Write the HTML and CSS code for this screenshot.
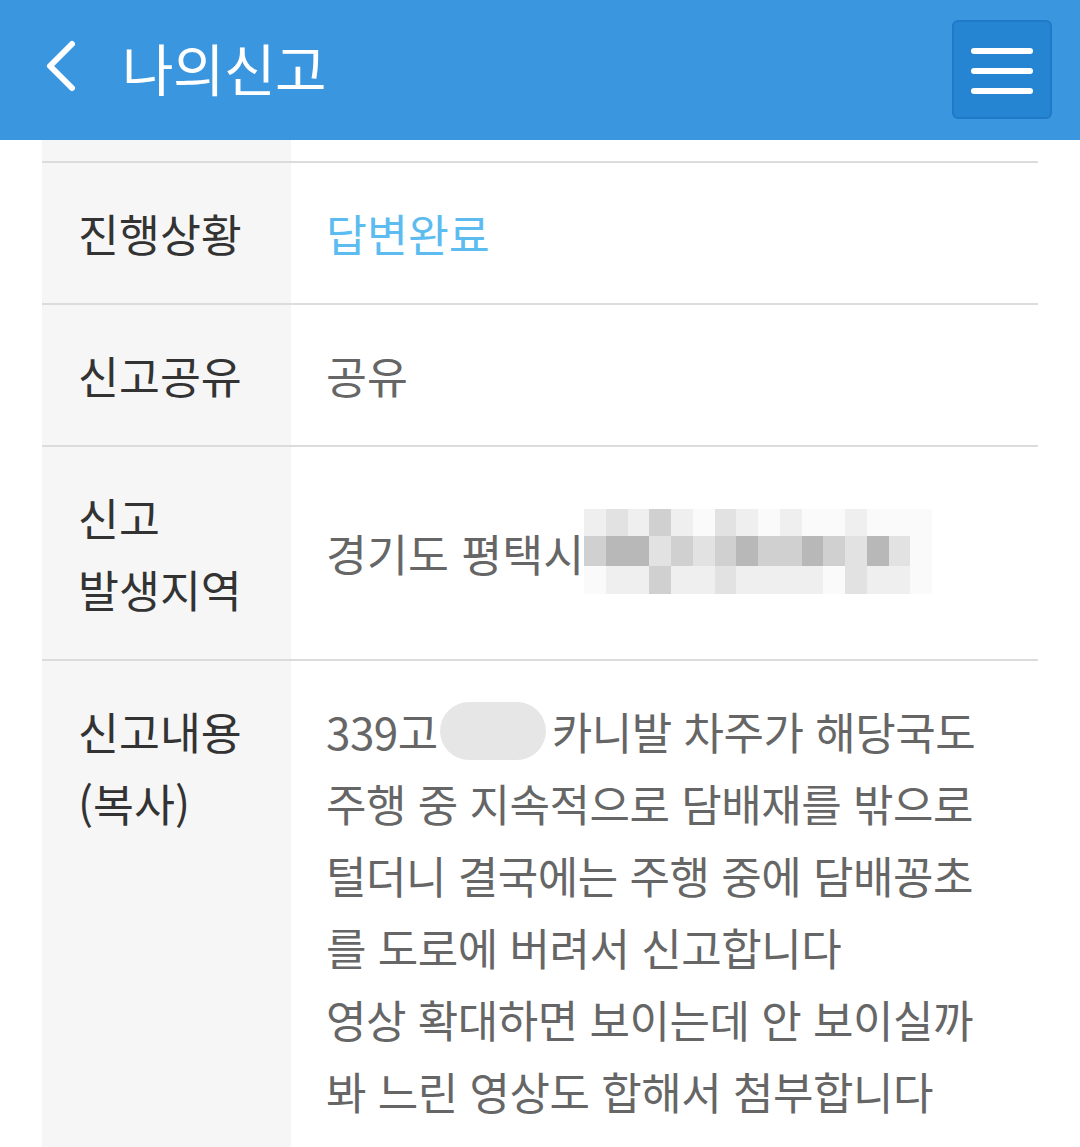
FILE: index.html
```html
<!DOCTYPE html>
<html lang="ko">
<head>
<meta charset="utf-8">
<title>나의신고</title>
<link rel="stylesheet" href="styles.css">
</head>
<body>
<header class="topbar">
  <a class="back" href="#" aria-label="뒤로">
    <svg width="40" height="56" viewBox="0 0 40 56"><path d="M32 6 L10 28 L32 50" fill="none" stroke="#fff" stroke-width="6" stroke-linecap="round" stroke-linejoin="round"/></svg>
  </a>
  <h1 class="title">나의신고</h1>
  <button class="menu" aria-label="메뉴">
    <span class="bar"></span><span class="bar"></span><span class="bar"></span>
  </button>
</header>
<main class="wrap">
  <div class="table">
    <div class="row stub"><div class="th"></div><div class="td"></div></div>
    <div class="row">
      <div class="th">진행상황</div>
      <div class="td status">답변완료</div>
    </div>
    <div class="row">
      <div class="th">신고공유</div>
      <div class="td">공유</div>
    </div>
    <div class="row">
      <div class="th">신고<br>발생지역</div>
      <div class="td center">경기도 평택시<span class="mosaic"><span class="m r1"><i class="c1"></i><i class="c2"></i><i class="c1"></i><i class="c3"></i><i class="c1"></i><i class="c0"></i><i class="c2"></i><i class="c1"></i><i class="c0"></i><i class="c1"></i><i class="c0"></i><i class="c0"></i><i class="c1"></i><i class="c0"></i><i class="c0"></i><i class="c0"></i></span><span class="m r2"><i class="c3"></i><i class="c4"></i><i class="c4"></i><i class="c2"></i><i class="c3"></i><i class="c2"></i><i class="c3"></i><i class="c4"></i><i class="c3"></i><i class="c3"></i><i class="c4"></i><i class="c3"></i><i class="c2"></i><i class="c4"></i><i class="c2"></i><i class="c0"></i></span><span class="m r3"><i class="c0"></i><i class="c1"></i><i class="c1"></i><i class="c3"></i><i class="c1"></i><i class="c1"></i><i class="c2"></i><i class="c1"></i><i class="c1"></i><i class="c1"></i><i class="c1"></i><i class="c0"></i><i class="c2"></i><i class="c1"></i><i class="c1"></i><i class="c0"></i></span></span></div>
    </div>
    <div class="row last">
      <div class="th">신고내용<br>(복사)</div>
      <div class="td content">339고<span class="blob"></span>카니발 차주가 해당국도<br>주행 중 지속적으로 담배재를 밖으로<br>털더니 결국에는 주행 중에 담배꽁초<br>를 도로에 버려서 신고합니다<br>영상 확대하면 보이는데 안 보이실까<br>봐 느린 영상도 합해서 첨부합니다</div>
    </div>
  </div>
</main>
</body>
</html>
```

FILE: styles.css
```css
* { box-sizing: border-box; }
html, body { margin: 0; padding: 0; }
body {
  background: #fff;
  font-family: "Noto Sans CJK KR", "Noto Sans", sans-serif;
  width: 1080px;
  height: 1147px;
  overflow: hidden;
}
.topbar {
  height: 140px;
  background: #3a97df;
  display: flex;
  align-items: center;
  padding: 0 28px 0 40px;
}
.back { display: flex; align-items: center; width: 44px; height: 60px; margin-top: -8px; }
.title {
  margin: -8px 0 0 38px;
  color: #fff;
  font-size: 56px;
  font-weight: 400;
  letter-spacing: -0.5px;
  flex: 1;
}
.menu {
  width: 100px;
  height: 99px;
  margin-top: -2px;
  background: #2585d3;
  border: 2px solid #2079c6;
  border-radius: 6px;
  display: flex;
  flex-direction: column;
  align-items: center;
  justify-content: flex-start;
  gap: 14px;
  padding: 26px 0 0;
}
.bar { display: block; width: 62px; height: 6px; background: #fff; border-radius: 3px; }

.wrap { padding: 0 42px; }
.table { width: 996px; }
.row {
  display: grid;
  grid-template-columns: 249px 1fr;
  border-bottom: 2px solid #dcdcdc;
}
.row.stub { height: 23px; }
.row.last { border-bottom: none; }
.th {
  background: #f6f6f6;
  color: #333;
  font-size: 44.5px;
  line-height: 72px;
  padding: 34px 0 34px 36px;
  letter-spacing: 0;
}
.td {
  color: #666;
  font-size: 44.5px;
  line-height: 72px;
  padding: 34px 0 34px 35px;
  letter-spacing: 0;
  white-space: nowrap;
}
.stub .th, .stub .td { padding: 0; }
.td.status { color: #5cbcf0; }
.td.center { display: flex; align-items: center; }
.content { font-size: 44px; line-height: 72px; padding-top: 34px; letter-spacing: -0.5px; }

.mosaic {
  display: inline-flex;
  flex-direction: column;
  width: 348px;
  height: 85px;
  margin-top: -4px;
  margin-left: 0;
}
.m { display: flex; height: 28px; }
.m.r1 { height: 27px; }
.m.r2 { height: 30px; }
.m i { flex: 1; display: block; }
.c0 { background: #fafafa; }
.c1 { background: #efefef; }
.c2 { background: #e2e2e2; }
.c3 { background: #d0d0d0; }
.c4 { background: #b8b8b8; }
.blob {
  display: inline-block;
  width: 106px;
  height: 58px;
  background: #e6e6e6;
  border-radius: 40px;
  vertical-align: -10px;
  margin: 0 6px 0 2px;
}
```
